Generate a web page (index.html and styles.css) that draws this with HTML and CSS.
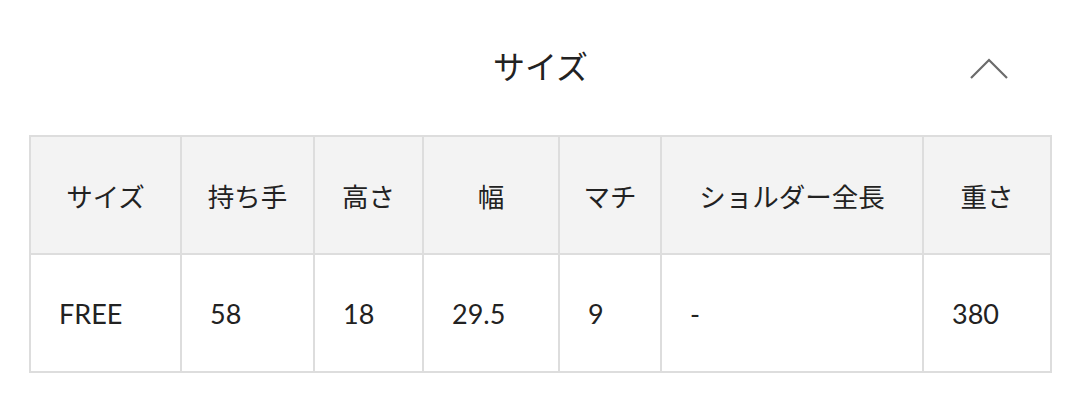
FILE: index.html
```html
<!DOCTYPE html>
<html lang="ja">
<head>
<meta charset="utf-8">
<link rel="stylesheet" href="styles.css">
</head>
<body>
<section class="size-section">
  <div class="section-head">
    <h2 class="section-title">サイズ</h2>
    <svg class="chevron" width="40" height="24" viewBox="0 0 40 24"><path d="M2 22 L20 4 L38 22" fill="none" stroke="#6b6b6b" stroke-width="2.2"/></svg>
  </div>
  <table class="size-table">
    <colgroup>
      <col class="c1"><col class="c2"><col class="c3"><col class="c4"><col class="c5"><col class="c6"><col class="c7">
    </colgroup>
    <thead>
      <tr><th>サイズ</th><th>持ち手</th><th>高さ</th><th>幅</th><th>マチ</th><th>ショルダー全長</th><th>重さ</th></tr>
    </thead>
    <tbody>
      <tr><td>FREE</td><td>58</td><td>18</td><td>29.5</td><td>9</td><td>-</td><td>380</td></tr>
    </tbody>
  </table>
</section>
</body>
</html>
```
FILE: styles.css
```css
html, body { margin: 0; padding: 0; background: #fff; }
body {
  font-family: Lato, "Noto Sans CJK JP", sans-serif;
  color: #222;
  width: 1080px;
  height: 420px;
  overflow: hidden;
}
.size-section { padding: 0 28px 0 29px; }
.section-head {
  position: relative;
  height: 135px;
  display: flex;
  align-items: center;
  justify-content: center;
}
.section-title {
  margin: 0;
  font-weight: 400;
  font-size: 32px;
  line-height: 1;
  padding-bottom: 2px;
}
.chevron {
  position: absolute;
  right: 43px;
  top: 56px;
}
.size-table {
  width: 1021px;
  border-collapse: collapse;
  table-layout: fixed;
  border: 2px solid #dddddd;
}
.size-table th, .size-table td {
  border: 2px solid #dddddd;
}
.size-table th {
  background: #f3f3f3;
  height: 116px;
  font-size: 26.5px;
  font-weight: 400;
  text-align: center;
  padding: 0;
}
.size-table td {
  height: 116px;
  font-size: 27px;
  font-weight: 400;
  text-align: left;
  padding: 0 0 0 28px;
}
.c1 { width: 151px; }
.c2 { width: 133px; }
.c3 { width: 109px; }
.c4 { width: 136px; }
.c5 { width: 102px; }
.c6 { width: 262px; }
.c7 { width: 128px; }
```
